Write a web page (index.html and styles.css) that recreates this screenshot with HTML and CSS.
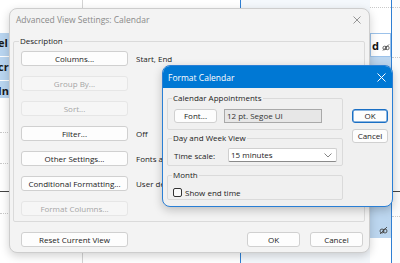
FILE: index.html
```html
<!DOCTYPE html>
<html>
<head>
<meta charset="utf-8">
<link rel="stylesheet" href="styles.css">
</head>
<body>
<div class="desk">
  <div class="cal">
    <div class="col col-a">
      <div class="cell sel"><span>el</span></div>
      <div class="cell sel"><span>cr</span></div>
      <div class="cell sel short"><span>In</span></div>
      <div class="hl dotted l1"></div>
      <div class="hl dotted l2"></div>
      <div class="hl solid l3"></div>
      <div class="hl dotted l4"></div>
    </div>
    <div class="col col-b"></div>
    <div class="col col-c"></div>
    <div class="col col-e">
      <div class="hl dotted e0"></div>
      <div class="daybox"><b>d</b><svg class="rec" width="9" height="7" viewBox="0 0 9 7"><circle cx="3" cy="4" r="2" fill="none" stroke="#444" stroke-width="0.9"/><circle cx="6" cy="4" r="2" fill="none" stroke="#444" stroke-width="0.9"/><line x1="1" y1="7" x2="8" y2="0" stroke="#444" stroke-width="0.9"/></svg></div>
      <div class="dayblue"><svg class="rec" width="9" height="7" viewBox="0 0 9 7"><circle cx="3" cy="4" r="2" fill="none" stroke="#444" stroke-width="0.9"/><circle cx="6" cy="4" r="2" fill="none" stroke="#444" stroke-width="0.9"/><line x1="1" y1="7" x2="8" y2="0" stroke="#444" stroke-width="0.9"/></svg></div>
    </div>
    <div class="col col-d">
      <div class="hl dotted d0"></div>
      <div class="hl dotted d1"></div>
      <div class="hl solid d2"></div>
      <div class="hl dotted d3"></div>
    </div>
  </div>

  <div class="dlg adv ui">
    <div class="tbar">
      <span>Advanced View Settings: Calendar</span>
      <svg width="8" height="8" viewBox="0 0 8 8"><path d="M0.5 0.5 L7.5 7.5 M7.5 0.5 L0.5 7.5" stroke="#8a8a8a" stroke-width="0.9"/></svg>
    </div>
    <fieldset class="grp desc">
      <legend>Description</legend>
      <div class="rows">
        <button class="btn">Columns...</button><span class="val">Start, End</span>
        <button class="btn dis">Group By...</button><span class="val"></span>
        <button class="btn dis">Sort...</button><span class="val"></span>
        <button class="btn">Filter...</button><span class="val">Off</span>
        <button class="btn">Other Settings...</button><span class="val">Fonts and other Calendar View settings</span>
        <button class="btn">Conditional Formatting...</button><span class="val">User defined color</span>
        <button class="btn dis">Format Columns...</button><span class="val"></span>
      </div>
    </fieldset>
    <div class="foot">
      <button class="btn reset">Reset Current View</button>
      <div class="okc">
        <button class="btn okb">OK</button>
        <button class="btn okb">Cancel</button>
      </div>
    </div>
  </div>

  <div class="dlg fmt ui">
    <div class="tbar blue">
      <span>Format Calendar</span>
      <svg width="9" height="9" viewBox="0 0 9 9"><path d="M0.5 0.5 L8.5 8.5 M8.5 0.5 L0.5 8.5" stroke="#ffffff" stroke-width="1"/></svg>
    </div>
    <div class="fbody">
      <div class="groups">
        <fieldset class="grp g1">
          <legend>Calendar Appointments</legend>
          <div class="inrow">
            <button class="btn fontb">Font...</button>
            <div class="field">12 pt. Segoe UI</div>
          </div>
        </fieldset>
        <fieldset class="grp g2">
          <legend>Day and Week View</legend>
          <div class="inrow">
            <span class="lbl">Time scale:</span>
            <div class="combo"><span>15 minutes</span><svg width="8" height="5" viewBox="0 0 8 5"><path d="M0.5 0.5 L4 4 L7.5 0.5" fill="none" stroke="#777" stroke-width="0.9"/></svg></div>
          </div>
        </fieldset>
        <fieldset class="grp g3">
          <legend>Month</legend>
          <div class="inrow chk">
            <span class="box"></span><span>Show end time</span>
          </div>
        </fieldset>
      </div>
      <div class="side">
        <button class="btn sb def">OK</button>
        <button class="btn sb">Cancel</button>
      </div>
    </div>
  </div>
</div>
</body>
</html>
```
FILE: styles.css
```css
html, body { margin: 0; padding: 0; }
body { width: 400px; height: 263px; overflow: hidden; background: #ffffff; }

.desk { position: relative; width: 400px; height: 263px; overflow: hidden; font-family: "Segoe UI", "Open Sans", sans-serif; }

/* calendar background */
.cal { display: flex; height: 263px; }
.col { position: relative; height: 263px; box-sizing: border-box; }
.col-a { width: 83px; border-right: 1px solid #d4d4d4; padding-top: 33px; }
.col-b { width: 158px; border-right: 1px solid #2f7fd3; }
.col-c { width: 129px; background: #f4f8fc; }
.col-e { width: 22px; border-right: 1px solid #2f7fd3; background: #ffffff; padding-top: 33px; }
.col-d { width: 8px; background: #fbfbfb; }

.cell { height: 24px; box-sizing: border-box; border-bottom: 1px solid #ffffff; background: #b9d5f0; font-weight: bold; font-size: 11px; line-height: 19px; color: #1a1a1a; overflow: hidden; white-space: nowrap; }
.cell span { display: block; margin-left: -2px; }
.cell.short { height: 17px; border-bottom: none; }

.hl { position: absolute; left: 0; right: 0; height: 0; }
.hl.dotted { border-top: 1px dotted #c9c9c9; }
.hl.solid { border-top: 1px solid #444; }
.l1 { top: 132px; }
.l2 { top: 163px; }
.l3 { top: 191px; }
.l4 { top: 213px; }
.e0 { top: 7px; }
.d0 { top: 7px; }
.d1 { top: 57px; }
.d2 { top: 191px; }
.d3 { top: 216px; }

.daybox { height: 24px; box-sizing: border-box; border: 1px solid #9cc2ea; background: #ffffff; display: flex; align-items: center; gap: 3px; padding-left: 1px; font-size: 11px; color: #111; }
.daybox .rec { margin-top: 4px; }
.dayblue { height: 181px; background: #bcd6ef; display: flex; align-items: flex-end; justify-content: flex-end; padding: 0 3px 4px 0; box-sizing: border-box; }

/* dialogs */
.ui { font-size: 8px; color: #1b1b1b; }
.dlg { position: absolute; box-sizing: border-box; display: flex; flex-direction: column; }

.adv { left: 9px; top: 8px; width: 361px; height: 245px; background: #f3f3f3; border: 1px solid #cdcdcd; border-radius: 8px; box-shadow: 0 3px 10px rgba(0,0,0,0.18); }
.tbar { height: 21px; display: flex; align-items: center; justify-content: space-between; padding: 0 8px 0 6px; color: #8a8a8a; font-size: 8.5px; flex: none; }
.tbar.blue { height: 22px; background: #0078d4; color: #ffffff; padding: 0 6px 0 5px; border-radius: 7px 7px 0 0; }

.grp { margin: 0; border: 1px solid #dadada; border-radius: 2px; padding: 0 0 0 5px; box-sizing: border-box; min-width: 0; }
.grp legend { padding: 0 1px; line-height: 12px; font-size: 8px; }

.desc { margin: 5px 4px 0 3px; height: 187px; padding-top: 4px; }
.rows { display: grid; grid-template-columns: 107px 1fr; column-gap: 8px; row-gap: 10px; margin-left: 2px; align-items: center; }
.val { white-space: nowrap; overflow: hidden; }

.btn { box-sizing: border-box; height: 15px; margin: 0; padding: 0; border: 1px solid #d0d0d0; border-radius: 3px; background: #fdfdfd; font-family: inherit; font-size: 8px; color: #1b1b1b; line-height: 13px; text-align: center; }
.btn.dis { background: #f6f6f6; border-color: #e6e6e6; color: #a5a5a5; }

.foot { display: flex; justify-content: space-between; margin-top: 10px; padding: 0 6px 0 11px; }
.reset { width: 107px; }
.okc { display: flex; gap: 10px; }
.okb { width: 53px; }

.fmt { left: 162px; top: 65px; width: 231px; height: 142px; background: #f0f0f0; border: 1px solid #2a7fd5; border-radius: 8px; box-shadow: 0 3px 10px rgba(0,0,0,0.22); }
.fbody { display: flex; padding: 4px 4px 0 4px; gap: 9px; }
.groups { display: flex; flex-direction: column; width: 176px; }
.g1 { height: 38px; padding-top: 5px; padding-left: 4px; }
.g2 { height: 34px; margin-top: 2px; padding-top: 4px; padding-left: 4px; }
.g3 { height: 31px; margin-top: 3px; padding-top: 6px; padding-left: 4px; }
.inrow { display: flex; align-items: center; margin-left: 2px; }
.fontb { width: 43px; height: 14px; line-height: 12px; }
.field { margin-left: 7px; width: 98px; height: 14px; box-sizing: border-box; border: 1px solid #a9a9a9; background: #e7e7e7; line-height: 12px; padding-left: 2px; color: #333; }
.lbl { width: 54px; }
.combo { width: 109px; height: 14px; box-sizing: border-box; border: 1px solid #cfcfcf; border-bottom-color: #8a8a8a; border-radius: 2px; background: #ffffff; display: flex; align-items: center; justify-content: space-between; padding: 0 4px 0 2px; line-height: 12px; }
.chk { gap: 3px; margin-left: 1px; }
.box { width: 9px; height: 9px; box-sizing: border-box; border: 1px solid #333; border-radius: 2px; background: #fafafa; }

.side { display: flex; flex-direction: column; gap: 6px; margin-top: 17px; }
.sb { width: 36px; height: 14px; line-height: 12px; }
.sb.def { border-color: #1a6fc4; box-shadow: inset 0 0 0 0.5px #1a6fc4; }
```
